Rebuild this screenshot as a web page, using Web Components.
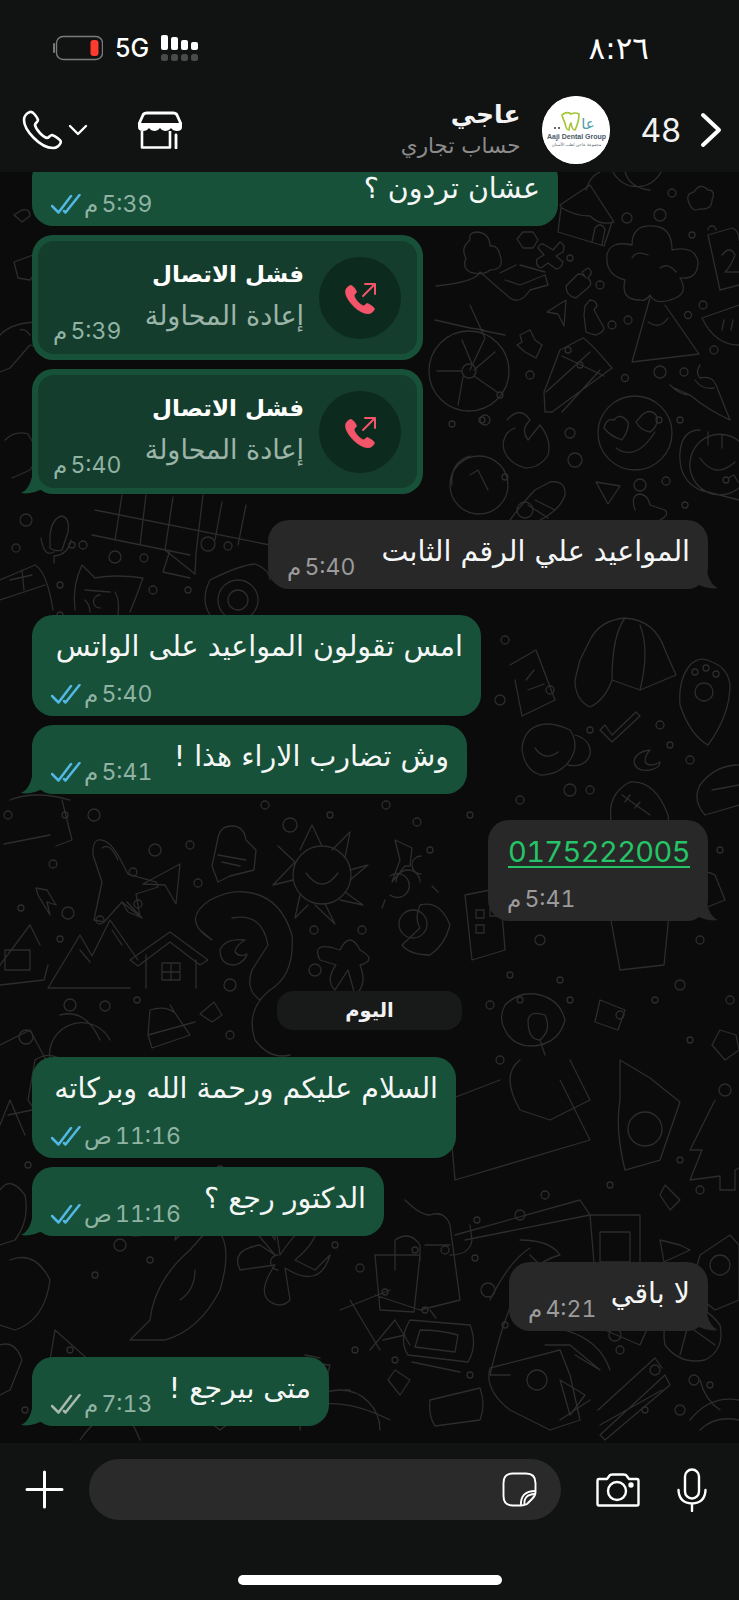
<!doctype html>
<html lang="ar">
<head>
<meta charset="utf-8">
<title>chat</title>
<style>
  html, body { margin: 0; background: #111212; }
  body { font-family: Inter, "DejaVu Sans", sans-serif; color: #fff; }
  chat-screen { width: 739px; height: 1600px; }
  .gap { margin-top: 17px; }
  .today { margin-top: 61px; }
</style>
</head>
<body>
<chat-screen>
  <status-bar slot="top"></status-bar>
  <chat-header slot="top"></chat-header>
  <chat-view>
    <chat-bubble inline style="width:526px;margin-top:-15px" time="5:39 م" ticks="blue">عشان تردون ؟</chat-bubble>
    <call-bubble time="5:39 م"></call-bubble>
    <call-bubble time="5:40 م" tail></call-bubble>
    <chat-bubble class="gap" out inline tail style="width:440px" time="5:40 م">المواعيد علي الرقم الثابت</chat-bubble>
    <chat-bubble class="gap" style="width:449px" time="5:40 م" ticks="blue">امس تقولون المواعيد على الواتس</chat-bubble>
    <chat-bubble inline tail style="width:435px" time="5:41 م" ticks="blue">وش تضارب الاراء هذا !</chat-bubble>
    <chat-bubble class="gap" out link tail style="width:220px" time="5:41 م">0175222005</chat-bubble>
    <day-chip class="today">اليوم</day-chip>
    <chat-bubble class="gap" style="width:424px;margin-top:18px" time="11:16 ص" ticks="blue">السلام عليكم ورحمة الله وبركاته</chat-bubble>
    <chat-bubble inline tail style="width:352px" time="11:16 ص" ticks="blue">الدكتور رجع ؟</chat-bubble>
    <chat-bubble class="gap" out inline tail style="width:199px" time="4:21 م">لا باقي</chat-bubble>
    <chat-bubble class="gap" inline tail style="width:297px" time="7:13 م" ticks="grey">متى بيرجع !</chat-bubble>
  </chat-view>
  <chat-composer slot="bottom"></chat-composer>
</chat-screen>

<script>
const phonePath = 'M8 2C5 3 2 6 2 10C2 20 18 38 31 38C35 38 38 35 39 32C39 30 33 26 30 25C28 25 27 28 25 28C21 27 14 20 13 15C13 13 16 12 16 10C15 7 11 1 8 2Z'

const screenTemplate = document.createElement('template')
screenTemplate.innerHTML = `
  <style>
    :host { display: flex; flex-direction: column; background: #111212; overflow: hidden; }
  </style>
  <slot name="top"></slot>
  <slot></slot>
  <slot name="bottom"></slot>
`
class ChatScreen extends HTMLElement {
  constructor() {
    super()
    this.attachShadow({ mode: 'open' }).append(screenTemplate.content.cloneNode(true))
  }
}
customElements.define('chat-screen', ChatScreen)

const statusTemplate = document.createElement('template')
statusTemplate.innerHTML = `
  <style>
    :host { display: flex; align-items: center; justify-content: space-between; height: 96px; padding: 0 90px 0 51px; box-sizing: border-box; }
    .left { display: flex; align-items: center; gap: 12px; margin-top: -1px; }
    .net { font: 500 25px Inter, sans-serif; color: #fff; }
    .clock { font: 500 31px "DejaVu Sans", sans-serif; color: #fff; direction: rtl; margin-top: 0; }
    svg { display: block; }
  </style>
  <div class="left">
    <svg width="52" height="26" viewBox="0 0 52 26">
      <path d="M3 9v8" stroke="#777" stroke-width="2" stroke-linecap="round"/>
      <rect x="5.5" y="1.5" width="46" height="23" rx="6.5" fill="none" stroke="#7b7b7b" stroke-width="1.4"/>
      <rect x="39.5" y="5" width="8" height="16" rx="3" fill="#ff3b30"/>
    </svg>
    <span class="net">5G</span>
    <svg width="37" height="26" viewBox="0 0 37 26">
      <g fill="#fff">
        <rect x="0" y="0" width="7" height="15" rx="2"/><rect x="10" y="2" width="7" height="13" rx="2"/>
        <rect x="20" y="5" width="7" height="10" rx="2"/><rect x="30" y="7" width="7" height="8" rx="2"/>
      </g>
      <g fill="#4a4a4a">
        <rect x="0" y="19" width="7" height="7" rx="2.5"/><rect x="10" y="19" width="7" height="7" rx="2.5"/>
        <rect x="20" y="19" width="7" height="7" rx="2.5"/><rect x="30" y="19" width="7" height="7" rx="2.5"/>
      </g>
    </svg>
  </div>
  <div class="clock">٨:٢٦</div>
`
class StatusBar extends HTMLElement {
  constructor() {
    super()
    this.attachShadow({ mode: 'open' }).append(statusTemplate.content.cloneNode(true))
  }
}
customElements.define('status-bar', StatusBar)

const headerTemplate = document.createElement('template')
headerTemplate.innerHTML = `
  <style>
    :host { display: flex; align-items: center; justify-content: space-between; height: 76px; padding: 0 17px 8px 22px; box-sizing: border-box; }
    .side { display: flex; align-items: center; }
    svg { display: block; }
    .chev { margin-left: 6px; }
    .store { margin-left: 49px; }
    .who { text-align: right; direction: rtl; margin-right: 21px; margin-top: 0; font-family: "DejaVu Sans", sans-serif; white-space: nowrap; }
    .name { font-size: 25px; font-weight: 700; line-height: 32px; color: #f4f4f4; }
    .kind { font-size: 21.500px; line-height: 30px; color: #8b8b8b; }
    .count { font: 400 32px Inter, sans-serif; margin: 0 19px 0 31px; color: #f2f2f2; }
    .avatar { width: 68px; height: 68px; border-radius: 50%; background: #fff; overflow: hidden; flex: none; }
  </style>
  <div class="side">
    <svg width="40" height="40" viewBox="0 0 40 40"><path d="${phonePath}" fill="none" stroke="#fff" stroke-width="2.6" stroke-linejoin="round"/></svg>
    <svg class="chev" width="20" height="12" viewBox="0 0 20 12"><path d="M2 2l8 8 8-8" fill="none" stroke="#fff" stroke-width="2.4" stroke-linecap="round" stroke-linejoin="round"/></svg>
    <svg class="store" width="46" height="38" viewBox="0 0 46 38">
      <path d="M2 13L6 4Q7 2 10 2H36Q39 2 40 4L44 13" fill="none" stroke="#fff" stroke-width="2.8" stroke-linejoin="round"/>
      <path d="M1 12H45V16Q45 20 40 20Q36 20 34 17Q32 20 28 20Q25 20 23 17Q21 20 18 20Q14 20 12 17Q10 20 6 20Q1 20 1 16Z" fill="#fff"/>
      <path d="M5 20V36.5H33V20" fill="none" stroke="#fff" stroke-width="2.6" stroke-linejoin="round"/>
      <path d="M39 24V37" stroke="#fff" stroke-width="2.8" stroke-linecap="round"/>
    </svg>
  </div>
  <div class="side">
    <div class="who">
      <div class="name">عاجي</div>
      <div class="kind">حساب تجاري</div>
    </div>
    <svg class="avatar" width="68" height="68" viewBox="0 0 68 68">
      <circle cx="34" cy="34" r="34" fill="#fff"/>
      <path d="M20 19Q25 15 29 18Q33 16 37 18Q37 26 33 34Q30 34 29 27Q28 27 27 34Q24 34 23 27Q21 23 20 19Z" fill="none" stroke="#a5c63b" stroke-width="1.7"/>
      <text x="46" y="33" text-anchor="middle" font-family="DejaVu Sans" font-size="15" fill="#4f9dab" direction="rtl">عا</text>
      <circle cx="13" cy="32" r="1" fill="#333"/><circle cx="17" cy="32" r="1" fill="#333"/>
      <text x="34.500" y="43" text-anchor="middle" font-family="Liberation Sans" font-size="7" font-weight="700" fill="#4c5a66">Aaji Dental Group</text>
      <text x="34.500" y="50" text-anchor="middle" font-family="DejaVu Sans" font-size="4.200" fill="#4c5a66" direction="rtl">مجموعة عاجي لطب الأسنان</text>
    </svg>
    <span class="count">48</span>
    <svg width="22" height="36" viewBox="0 0 22 36"><path d="M3 3l16 15L3 33" fill="none" stroke="#fff" stroke-width="4" stroke-linecap="round" stroke-linejoin="round"/></svg>
  </div>
`
class ChatHeader extends HTMLElement {
  constructor() {
    super()
    this.attachShadow({ mode: 'open' }).append(headerTemplate.content.cloneNode(true))
  }
}
customElements.define('chat-header', ChatHeader)

// wallpaper doodles, in page coordinates
const doodles = [
  // top right: hut, ball, cloud, tree on a hill
  'M560 205L590 185L614 222Q600 226 590 216Q575 216 562 208ZM561 208L558 232L604 246L612 222M592 242L595 228Q600 221 605 229L602 245M586 190Q590 176 600 172',
  'M613 172A27 27 0 0 0 661 172M625 172Q630 188 650 190',
  'M690 205Q684 194 694 192Q700 182 708 190Q716 190 712 200Q712 210 700 209Q692 212 690 205Z',
  'M640 300Q620 300 625 280Q605 275 607 255Q610 240 632 245Q632 225 652 226Q672 226 672 250Q695 245 698 262Q698 280 680 278Q690 295 670 300Q655 305 650 295Q645 302 640 300ZM632 258Q636 250 648 255M660 268Q668 262 676 272',
  'M650 298L632 362L699 354L665 305M648 322Q660 330 668 318',
  // person with plate, wheel
  'M478 232Q468 232 470 240Q460 248 466 258Q462 268 470 272Q484 276 490 270Q505 270 500 255Q498 245 490 246Q490 234 478 232ZM480 272Q476 282 436 286M480 272L510 298Q520 305 530 290L548 285L545 275L520 285L505 280M500 273L516 265M520 265L545 272M435 320L470 328L484 330M470 305L485 338L470 370M480 330L505 335',
  'M469 331A40 40 0 1 0 469 411A40 40 0 1 0 469 331ZM469 364A7 7 0 1 0 469 378A7 7 0 1 0 469 364ZM472 364L462 340M474 370L495 352M474 376L497 392M463 377L458 405M462 371H437',
  // small shapes
  'M517 239L523 232L533 232L538 240L533 248L523 248Z',
  'M545 245L553 250L560 242Q566 245 563 252L556 256L563 262Q562 268 556 269L548 263L541 268Q535 266 537 259L544 255L538 248Q540 242 545 245Z',
  'M566 286L578 274Q584 274 586 278L582 272L588 268Q592 270 591 274L588 278Q592 282 590 286L576 298Q566 296 566 286Z',
  'M547 312L566 300L564 326L558 314Z',
  'M585 306L590 300Q596 300 597 306L594 310L604 328Q604 332 596 335Q590 334 586 332L584 315Z',
  'M520 335L530 330L535 340L542 345L536 358L525 352L517 345L522 342Z',
  // pencil, chili, melon, calendar
  'M560 350L583 338Q590 342 612 368L552 412L545 412L544 392ZM562 356L604 376M546 392L590 352M562 412L600 370',
  'M670 385Q680 395 690 395Q708 410 730 420Q722 400 716 385Q712 375 700 378Q695 372 700 365M690 395L672 387M695 380Q702 390 714 388',
  'M702 318L739 305M702 318Q715 345 739 345M724 320L722 330M733 320L731 330',
  'M708 235L732 228Q739 230 739 240M708 235L720 290L739 285M716 230A4 4 0 1 0 708 230M722 255Q730 245 735 255Q730 268 725 272H739',
  // heart smile, tongue smile, clock, flame, corn, plane
  'M635 396A37 37 0 1 0 635 470A37 37 0 1 0 635 396ZM614 420Q620 412 628 422Q630 428 622 440Q610 436 604 428Q606 418 614 420ZM642 415Q650 408 656 415Q660 425 650 432Q640 430 636 422ZM616 448Q636 462 655 432',
  'M700 430Q682 430 680 452Q678 480 700 490L739 500M740 442A30 30 0 0 0 690 462A30 30 0 0 0 739 488M700 458Q715 480 735 462M708 432L708 445M722 435L722 448M728 478L734 475L738 482',
  'M479 456A29 29 0 1 0 479 514A29 29 0 1 0 479 456ZM470 475L478 470L488 490M452 485Q450 462 470 456',
  'M507 420Q520 405 530 420Q520 430 528 440L540 425Q552 440 548 455Q540 468 525 468Q505 462 503 445Q504 432 515 428',
  'M510 520Q525 500 535 490L550 482Q566 480 565 495Q560 510 540 520M535 500L555 510M528 505L548 518',
  'M596 482L620 486L608 504Z',
  'M635 510Q630 495 640 494Q648 495 650 505L665 510Q670 515 660 520',
  // crossword, mic, cat, camera, calculator
  'M95 510L270 545M92 535L190 555M122 495L115 540M146 495L140 545M173 497L165 550L195 574L196 553L203 495M222 502L215 540M246 505L238 545M170 550L163 572L190 578',
  'M50 535Q52 518 62 516Q70 518 68 532L62 550Q55 552 50 548ZM41 538Q44 558 54 552M71 540Q68 555 54 556M54 556V563',
  'M82 565L95 578Q115 574 143 578Q135 600 130 612M82 565Q72 585 75 610M85 590L110 592M85 600Q90 605 90 612M115 592Q120 600 118 615M100 595A5 5 0 1 0 100 608',
  'M210 580Q240 565 255 564Q270 570 270 580M210 580Q200 600 210 615M238 580A20 20 0 1 0 238 620A20 20 0 1 0 238 580ZM238 590A10 10 0 1 0 238 610A10 10 0 1 0 238 590Z',
  'M0 580L35 565Q47 572 53 610M0 600L45 585M22 570L24 590M10 580L32 575',
  // left column middle
  'M14 215L22 210Q30 208 30 216L22 222ZM14 262L36 254Q44 252 44 262L30 280L18 278Z',
  'M0 335Q12 322 40 322L56 346Q46 350 30 345L10 368L0 372M20 330Q25 328 30 335',
  'M5 440Q15 430 28 434L40 455L30 470L12 478',
  // right column middle: cap, paw, cup, tick, moon, ball, taco, pot
  'M590 640Q600 620 625 618Q655 620 665 650L676 675L640 690L612 680Q605 700 590 707Q575 700 575 680L580 660ZM625 618Q612 635 612 680M640 625Q650 650 640 690',
  'M690 665Q700 655 712 662Q728 668 730 685Q730 715 708 745Q690 735 680 705Q678 680 690 665ZM704 683A9 9 0 1 0 704 701A9 9 0 1 0 704 683Z',
  'M530 730Q545 718 570 730Q580 745 570 760Q560 775 540 775Q525 770 522 750Q522 738 530 730ZM575 735Q592 740 590 755Q585 768 568 765M535 748Q545 762 558 752',
  'M600 730L612 742L640 716L636 712L612 735L605 725Z',
  'M650 750Q635 752 634 762Q636 772 650 770Q660 768 660 762Q650 768 645 762Q645 755 650 750Z',
  'M612 825Q605 795 630 782Q655 780 668 815Q670 825 665 830M622 795L650 815M630 795L625 802M640 802L635 808',
  'M739 765Q715 765 700 785Q692 800 705 815L739 805M712 790L739 785',
  'M510 665L536 650L555 700L522 716L515 680M526 680L534 670M528 690L544 684',
  'M610 915L670 905L664 965L620 970ZM606 905L675 895L676 908L608 920Z',
  'M680 880Q695 865 715 875L725 900L700 910Z',
  // left column lower
  'M10 800Q35 790 70 800M62 800L72 840L56 846M4 844L50 835',
  'M98 840Q108 838 118 855L128 874L156 882L158 887L136 894L140 917L128 912L122 902L104 922L94 920L102 882L93 855Q92 842 98 840ZM102 848Q110 842 118 860M122 902L142 918L127 902',
  'M218 838Q220 826 232 826Q244 826 246 840L256 850L254 870L230 876L218 882L212 866ZM218 855L246 860M222 862L240 866',
  'M143 884L180 864L176 904L165 885Z',
  'M36 888L47 890L56 905L47 902L50 915L38 895Z',
  'M322 846A29 29 0 1 0 322 904A29 29 0 1 0 322 846ZM306 873Q322 895 338 873M322 846L312 825L300 850M345 858L350 832L332 850M350 870L368 865L350 880M345 892L363 905L340 900M325 904L335 924L315 905M300 895L295 918L308 905M293 880L273 885L295 862L278 846',
  'M405 866L392 882L400 860L395 840L412 848L410 866ZM421 856A9 9 0 1 0 421 874',
  'M390 895A12 12 0 1 0 390 876M420 882A12 12 0 1 0 396 882M432 886L438 892M385 900L382 908',
  'M210 900Q230 890 245 892Q280 895 292 935Q295 975 270 990Q245 1010 255 1040Q270 1060 290 1055M210 900Q180 920 212 940L200 930M232 918Q262 912 268 945L252 970Q245 990 260 1000',
  'M48 988L80 935L92 956L110 920L138 960M130 988L48 988M80 950L90 962M112 930L122 945',
  'M130 960L170 932L208 960L200 965L170 942L138 966ZM146 955V988M196 960V988M162 963H180V980H162ZM171 963V980M162 972H180',
  'M0 965L30 925L40 945M0 985L44 980L48 965M5 950H30V970H5Z',
  'M245 940Q225 938 220 950Q220 965 235 965Q245 962 247 954Q240 958 235 952Q236 945 245 940Z',
  'M420 905Q414 918 420 928L402 945Q410 955 430 955Q445 945 450 925Q440 900 420 905Z',
  'M413 910A14 14 0 1 0 413 938A14 14 0 1 0 413 910Z',
  'M340 950Q310 940 320 960L336 965Q325 980 335 990L348 970L355 995Q368 985 360 965Q378 960 360 950Q350 930 340 950Z',
  'M465 895L500 888L505 950L472 960Z M476 910H484V918H476ZM476 925H484V933H476ZM490 908H498V916H490Z',
  // today area
  'M150 1010Q165 1005 175 1013L190 1035L152 1048L148 1035ZM148 1035L195 1022M175 1013L170 1005',
  'M214 1002L222 1015L212 1022L200 1014Z',
  'M60 1015Q85 1008 100 1040M50 1060A32 32 0 0 1 110 1040',
  'M0 1045L30 1030L46 1060',
  // woman at laptop
  'M505 1005Q520 990 540 995Q560 1000 565 1020Q560 1040 540 1045Q515 1050 505 1030Q498 1018 505 1005ZM528 1020Q530 1010 545 1015Q552 1030 540 1040Q528 1040 528 1020ZM540 1040L545 1055M560 1080L590 1140L455 1180L448 1100L500 1080M520 1060Q500 1075 520 1110L550 1120L590 1100L570 1060',
  'M455 1235L580 1200L590 1215L465 1240',
  'M620 1060L650 1078L680 1102L660 1160L625 1170Q615 1130 620 1100ZM645 1112A17 17 0 1 0 645 1146A17 17 0 1 0 645 1112Z',
  'M715 1100L690 1150H702L690 1180L720 1176V1190H735V1170L739 1168',
  'M600 1000L625 1010L618 1030L595 1022Z',
  'M720 1030L736 1035L739 1050L725 1060L712 1045Z',
  'M665 1185L680 1200L670 1210L660 1195Z',
  'M0 1125L10 1100L25 1135M8 1115L32 1110M0 1190Q10 1175 25 1195Q30 1220 15 1240L0 1245',
  'M35 1060Q50 1050 65 1062L72 1110Q60 1125 40 1118L28 1100ZM48 1070L50 1100',
  // lower half
  'M590 1215H640V1275H595ZM615 1280L660 1300L640 1345L600 1328ZM600 1232H630V1262H600Z',
  'M660 1240L680 1245L690 1250L664 1262Z',
  'M700 1255L730 1235L739 1245V1300L715 1310L690 1290ZM720 1255A10 10 0 1 0 720 1275A10 10 0 1 0 720 1255ZM684 1295L690 1320L705 1310',
  'M520 1240Q550 1240 560 1255Q540 1260 530 1275Q510 1290 490 1375L510 1375M530 1255L550 1275M490 1300Q510 1260 530 1248',
  'M405 1200Q420 1215 430 1215Q445 1210 450 1225L460 1300L420 1310L375 1295M375 1255H420L414 1312L380 1310ZM395 1270V1240Q410 1230 420 1245V1260M425 1245H450',
  'M450 1255Q470 1255 472 1240L470 1225',
  'M280 1255Q300 1225 320 1215Q320 1240 295 1260L315 1270L330 1255Q320 1290 285 1268L290 1300Q280 1310 268 1300Q258 1290 275 1265L240 1270Q230 1250 260 1245L275 1255L250 1225Q255 1210 275 1240V1220ZM278 1255A7 7 0 1 0 278 1270',
  'M212 1225Q235 1240 220 1290Q200 1330 165 1340L130 1340L150 1320Q155 1280 190 1250ZM180 1300Q195 1290 195 1270',
  'M175 1180L190 1200L205 1185L198 1210L210 1230L190 1225L175 1240L180 1215L160 1200Z',
  'M130 1190Q150 1190 155 1215Q150 1240 130 1235Q115 1230 120 1210Q120 1195 130 1190Z',
  'M10 1260Q35 1250 50 1280Q45 1320 15 1330L0 1325',
  'M55 1330L45 1390M55 1330L100 1370L60 1372',
  'M340 1310L390 1290M350 1300L380 1350M395 1320L370 1350M395 1320L410 1345M383 1340L405 1335',
  'M410 1320L470 1325Q478 1345 468 1362L408 1355Q398 1340 410 1320ZM420 1330Q440 1330 458 1335L455 1352L415 1347ZM412 1362L460 1372',
  'M430 1310L436 1318',
  'M290 1415Q330 1390 390 1420M300 1430A30 30 0 0 1 380 1430M345 1390H350',
  'M430 1400L480 1388Q486 1405 480 1420L435 1426Q428 1415 430 1400Z',
  'M395 1370L410 1380L400 1395L388 1380Z',
  'M490 1368L560 1350L570 1375L580 1420L550 1430L510 1410Q484 1390 490 1368ZM537 1370A10 10 0 1 0 537 1390A10 10 0 1 0 537 1370ZM560 1420L590 1400',
  'M545 1345L570 1345L600 1370M565 1330Q600 1340 610 1370M600 1370L575 1355',
  'M560 1380L585 1395L570 1415Z',
  'M600 1435L665 1375L670 1385L605 1440ZM600 1425L662 1390M598 1410L655 1358L662 1368',
  'M680 1300Q705 1305 720 1325Q725 1350 705 1360Q680 1365 665 1345Q660 1320 680 1300ZM680 1320L715 1345M695 1300L680 1355',
  'M690 1420Q710 1395 739 1400M700 1380Q705 1400 720 1410M700 1430Q715 1415 739 1420',
  'M300 1362L330 1365L325 1385L295 1382ZM305 1355L320 1358',
  'M210 1395L232 1395L240 1415L220 1430L200 1415Z',
  'M90 1400Q120 1390 140 1440M80 1440Q100 1410 130 1410',
  'M0 1345Q15 1340 22 1360L10 1390L0 1395'
]
const dots = [
  [627,218,5],[660,215,6],[692,235,3],[672,193,4],[600,285,4],[570,258,3],[612,325,4],[568,350,3],[628,320,4],[660,372,6],[684,372,4],[703,305,4],[688,315,3.5],[714,350,4],[625,378,3.5],[659,420,3],[680,420,3],
  [482,420,3],[452,424,3],[485,420,5],[570,433,5],[575,460,7],[505,477,3],[640,485,6],[666,481,4],[685,505,3],[525,510,8],[726,480,3],[530,375,4],[580,365,3],[500,395,3],
  [26,520,6],[16,548,4],[72,545,3],[83,545,4],[60,585,3],[115,557,6],[144,558,4],[208,544,7],[228,546,4],[153,590,4],[188,590,3],[60,615,3],
  [695,672,3],[706,668,3],[716,674,3],[505,640,4],[500,700,5],[550,690,4],[590,730,3],[660,725,4],[690,760,4],[670,745,3],[590,790,4],[570,790,6],[520,800,4],[600,850,4],[650,850,3],[690,850,5],[530,860,4],[560,850,3],[720,850,3],[540,940,5],[580,880,3],[700,940,4],[560,980,3],[680,985,5],
  [8,815,4],[65,815,3],[94,815,6],[155,850,6],[190,845,4],[265,805,4],[290,825,7],[330,815,3],[386,805,4],[417,822,4],[430,850,3],[470,815,3],[53,864,4],[133,872,4],[198,883,4],[138,904,4],[68,913,6],[21,908,3],[100,920,4],[60,939,3],[314,930,4],[362,930,4],[315,970,6],[230,985,6],[105,1006,5],[70,1005,6],[137,1000,3],[230,1035,4],[26,1037,7],
  [490,1005,4],[510,975,3],[500,1060,4],[445,1020,5],[520,1000,3],[570,1000,3],[620,1015,4],[655,1000,3],[730,1000,4],[725,1090,6],[690,1040,3],[610,1185,3],[545,1195,4],[520,1215,5],[680,1160,3],[700,1190,4],
  [477,1220,3],[488,1290,7],[505,1325,3],[475,1258,3],[560,1325,3],[615,1335,6],[655,1370,5],[620,1350,4],[645,1410,3],[710,1385,3],[694,1380,5],[680,1410,5],[425,1310,3],[385,1292,3],[395,1360,3],[355,1350,3],[470,1375,3],
  [95,1275,3],[120,1245,6],[150,1260,3],[65,1200,3],[28,1165,3],[60,1140,3],[220,1170,4],[240,1150,3],[335,1245,3],[360,1268,4],[175,1370,3],[145,1375,3],[70,1350,3],[25,1410,3],[110,1395,3],[265,1390,3],[215,1378,3],[415,1250,3],[445,1250,4]
]

const viewTemplate = document.createElement('template')
viewTemplate.innerHTML = `
  <style>
    :host { display: block; position: relative; flex: 1; min-height: 0; overflow: hidden; background: #0b0b0b; }
    svg.paper { position: absolute; left: 0; top: 0; width: 739px; height: 1271px; }
    .list { position: relative; display: flex; flex-direction: column; gap: 9px; padding: 0 31px 0 32px; height: 100%; box-sizing: border-box; }
  </style>
  <svg class="paper" viewBox="0 172 739 1271" fill="none" stroke="#2d2d2d" stroke-width="1.3" stroke-linejoin="round" stroke-linecap="round">
    ${doodles.map(d => `<path d="${d}"/>`).join('')}
    ${dots.map(([x, y, r]) => `<circle cx="${x}" cy="${y}" r="${r}"/>`).join('')}
  </svg>
  <div class="list"><slot></slot></div>
`
class ChatView extends HTMLElement {
  constructor() {
    super()
    this.attachShadow({ mode: 'open' }).append(viewTemplate.content.cloneNode(true))
  }
}
customElements.define('chat-view', ChatView)

const ticksSvg = color => `<svg width="30" height="21" viewBox="0 0 30 21"><path d="M1 12l6.500 6.500L20 2M13 17l1.500 1.500L28.500 1" fill="none" stroke="${color}" stroke-width="2.500" stroke-linecap="round" stroke-linejoin="round"/></svg>`

const bubbleStyles = `
  .meta { display: flex; align-items: center; gap: 3px; direction: ltr; flex: none; height: 30px; }
  .time { font: 400 23px Inter, "DejaVu Sans", sans-serif; font-variant-numeric: tabular-nums; word-spacing: -3px; direction: rtl; white-space: nowrap; color: var(--meta); }
  .meta svg { display: block; }
`

class ChatBubble extends HTMLElement {
  constructor() {
    super()
    const out = this.hasAttribute('out')
    const inline = this.hasAttribute('inline')
    const ticks = this.getAttribute('ticks')
    const color = out ? '#282828' : '#175139'
    const tick = ticks ? ticksSvg(ticks === 'blue' ? '#53b9e4' : '#a9b8b0') : ''
    const tail = !this.hasAttribute('tail') ? '' : out
      ? `<svg class="tail" style="right:-11px" width="24" height="26" viewBox="0 0 24 26"><path d="M0 0H11Q12 20 23 25Q12 27 0 20Z" fill="${color}"/></svg>`
      : `<svg class="tail" style="left:-12px" width="24" height="26" viewBox="0 0 24 26"><path d="M24 0H13Q12 20 1 25Q12 27 24 20Z" fill="${color}"/></svg>`
    this.attachShadow({ mode: 'open' }).innerHTML = `
      <style>
        :host { display: block; position: relative; align-self: ${out ? 'flex-end' : 'flex-start'}; flex: none; box-sizing: border-box; --meta: ${out ? '#9b9b9b' : '#90b3a3'}; }
        .box { position: relative; z-index: 1; display: flex; flex-direction: ${inline ? 'row-reverse' : 'column'}; justify-content: space-between; align-items: ${inline ? 'flex-end' : 'stretch'}; background: ${color}; border-radius: 21px; padding: 12px 18px 7px 19px; min-height: 69px; box-sizing: border-box; }
        .text { font: 400 28.500px/40px "DejaVu Sans", sans-serif; color: #f5f7f6; direction: rtl; text-align: right; align-self: flex-start; width: ${inline ? 'auto' : '100%'}; white-space: nowrap; }
        .stack-gap { height: 12px; }
        .inline-pad { padding-top: 20px; }
        .link { font: 400 29px/40px Inter, sans-serif; font-variant-numeric: tabular-nums; letter-spacing: -.6px; color: #25c466; direction: ltr; margin-right: 3px; text-decoration: underline; text-underline-offset: 4px; text-decoration-thickness: 2px; }
        .tail { position: absolute; bottom: 0; z-index: 0; display: block; }
        ${bubbleStyles}
      </style>
      ${tail}
      <div class="box">
        <div class="text ${this.hasAttribute('link') ? 'link' : ''}"><slot></slot></div>
        ${inline ? '' : '<div class="stack-gap"></div>'}
        <div class="meta ${inline ? 'inline-pad' : ''}">${tick}<span class="time">${this.getAttribute('time')}</span></div>
      </div>
    `
  }
}
customElements.define('chat-bubble', ChatBubble)

class CallBubble extends HTMLElement {
  constructor() {
    super()
    const tail = this.hasAttribute('tail')
      ? `<svg class="tail" width="24" height="26" viewBox="0 0 24 26"><path d="M24 0H13Q12 20 1 25Q12 27 24 20Z" fill="#175139"/></svg>`
      : ''
    this.attachShadow({ mode: 'open' }).innerHTML = `
      <style>
        :host { display: block; position: relative; width: 391px; height: 125px; flex: none; align-self: flex-start; }
        .tail { position: absolute; left: -12px; bottom: 0; display: block; }
        .box { position: relative; box-sizing: border-box; height: 100%; background: #175139; border-radius: 21px; padding: 6px; }
        .inner { position: relative; box-sizing: border-box; height: 100%; background: #143d2d; border-radius: 16px; display: flex; direction: rtl; align-items: center; padding: 0 16px 0 15px; gap: 15px; }
        .circle { width: 82px; height: 82px; border-radius: 50%; background: #0d2a1e; flex: none; display: flex; align-items: center; justify-content: center; }
        .lines { flex: 1; font-family: "DejaVu Sans", sans-serif; margin-top: -6px; }
        .title { font-size: 23px; font-weight: 700; line-height: 42px; color: #fff; white-space: nowrap; }
        .sub { font-size: 27px; line-height: 42px; color: #9db5a9; white-space: nowrap; }
        .time { position: absolute; left: 15px; bottom: 9px; font: 400 23px Inter, "DejaVu Sans", sans-serif; font-variant-numeric: tabular-nums; word-spacing: -3px; color: #90b3a3; white-space: nowrap; direction: rtl; }
      </style>
      ${tail}
      <div class="box"><div class="inner">
        <div class="circle">
          <svg width="34" height="34" viewBox="0 0 34 34">
            <g transform="translate(1 3) scale(.78)"><path d="${phonePath}" fill="#f4556a" stroke="#f4556a" stroke-width="1"/></g>
            <path d="M20 15L31 4M22 3H32V13" fill="none" stroke="#f4556a" stroke-width="2" stroke-linecap="round" stroke-linejoin="round"/>
          </svg>
        </div>
        <div class="lines">
          <div class="title">فشل الاتصال</div>
          <div class="sub">إعادة المحاولة</div>
        </div>
        <span class="time">${this.getAttribute('time')}</span>
      </div></div>
    `
  }
}
customElements.define('call-bubble', CallBubble)

const chipTemplate = document.createElement('template')
chipTemplate.innerHTML = `
  <style>
    :host { display: flex; align-items: center; justify-content: center; align-self: center; flex: none; width: 185px; height: 39px; margin-left: -1px; border-radius: 16px; background: #181919; font: 700 19.500px "DejaVu Sans", sans-serif; color: #f2f2f2; direction: rtl; }
  </style>
  <slot></slot>
`
class DayChip extends HTMLElement {
  constructor() {
    super()
    this.attachShadow({ mode: 'open' }).append(chipTemplate.content.cloneNode(true))
  }
}
customElements.define('day-chip', DayChip)

const composerTemplate = document.createElement('template')
composerTemplate.innerHTML = `
  <style>
    :host { display: block; height: 157px; background: #111212; box-sizing: border-box; padding-top: 16px; }
    .row { display: flex; align-items: center; height: 61px; padding: 0 32px 0 25px; }
    .field { flex: 1; height: 61px; margin: 0 35px 0 25px; background: #2a2a2a; border-radius: 31px; display: flex; align-items: center; justify-content: flex-end; padding-right: 24px; box-sizing: border-box; }
    .mic { margin-left: 37px; }
    svg { display: block; flex: none; }
    .home { width: 264px; height: 10px; border-radius: 5px; background: #fff; margin: 55px auto 0; }
  </style>
  <div class="row">
    <svg width="39" height="39" viewBox="0 0 39 39"><path d="M19.500 2V37M2 19.500H37" stroke="#fff" stroke-width="3" stroke-linecap="round"/></svg>
    <div class="field">
      <svg width="35" height="35" viewBox="0 0 35 35" fill="none" stroke="#fff" stroke-width="1.900" stroke-linejoin="round">
        <path d="M11 1.500H24Q33.500 1.500 33.500 11V20Q33.500 24 30 27L25 32Q22 33.500 19 33.500H11Q1.500 33.500 1.500 24V11Q1.500 1.500 11 1.500Z"/>
        <path d="M19 33.500Q18 19 33.500 19"/>
        <path d="M22.500 32.500Q21.500 22.500 33 22"/>
      </svg>
    </div>
    <svg width="44" height="34" viewBox="0 0 44 34" fill="none" stroke="#fff" stroke-width="2.400" stroke-linejoin="round">
      <path d="M3 6H11L14 2Q15 1.500 17 1.500H27Q29 1.500 30 2L33 6H41Q42.500 6 42.500 8V31Q42.500 32.500 41 32.500H3Q1.500 32.500 1.500 31V8Q1.500 6 3 6Z"/>
      <circle cx="21" cy="18" r="9"/>
      <circle cx="35" cy="12" r="1.500" fill="#fff"/>
    </svg>
    <svg class="mic" width="30" height="44" viewBox="0 0 30 44" fill="none" stroke="#fff" stroke-width="2.400" stroke-linecap="round">
      <rect x="8" y="1.500" width="14" height="29" rx="7"/>
      <path d="M1.500 22Q2 35 15 35.500Q28 35 28.500 22M15 35.500V43"/>
    </svg>
  </div>
  <div class="home"></div>
`
class ChatComposer extends HTMLElement {
  constructor() {
    super()
    this.attachShadow({ mode: 'open' }).append(composerTemplate.content.cloneNode(true))
  }
}
customElements.define('chat-composer', ChatComposer)
</script>
</body>
</html>
